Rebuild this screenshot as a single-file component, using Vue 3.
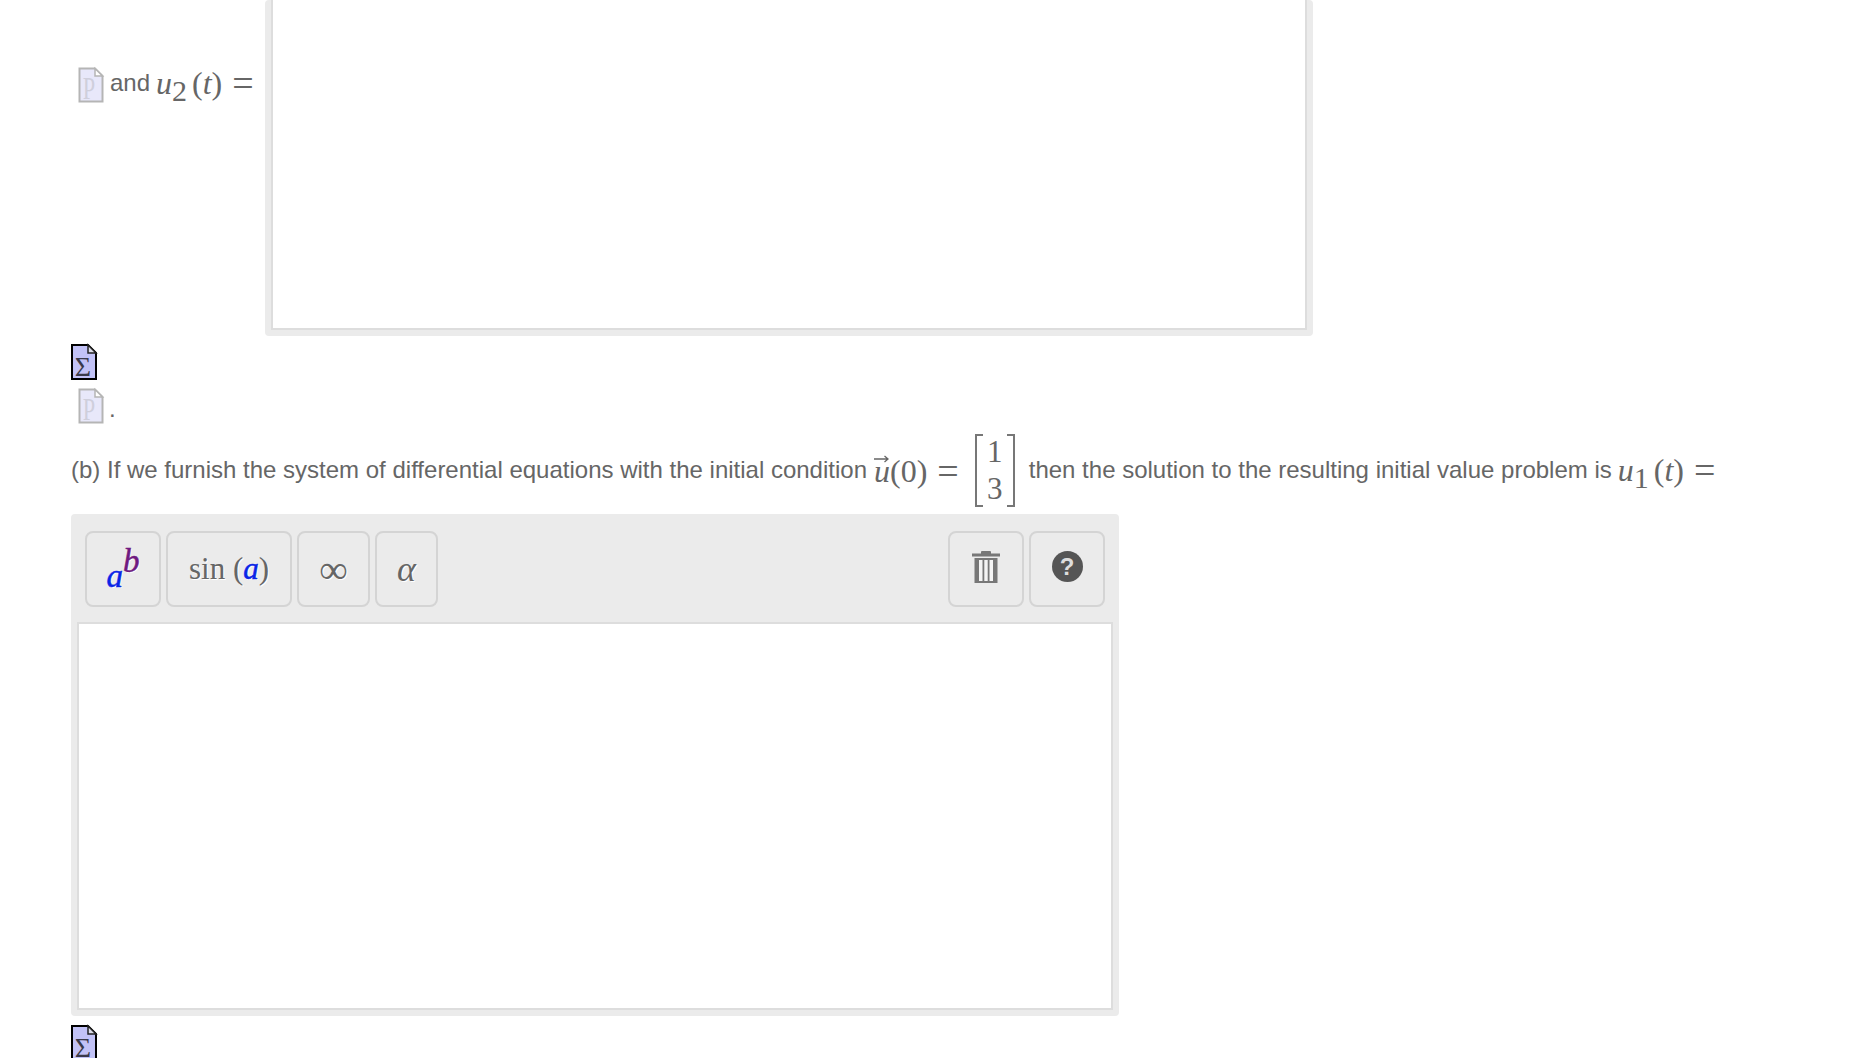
<template>
  <div class="page">
    <div class="answer-row">
      <div class="inline-text first">
        <svg class="doc-icon" viewBox="0 0 26 36" width="26" height="36">
          <path d="M1.500 1.500H17L24.500 9V34.500H1.500Z" fill="#e8e8fa" stroke="#b5b5b5" stroke-width="2" />
          <path d="M17 1.500V9H24.500Z" fill="#fff" stroke="#b5b5b5" stroke-width="1.500" />
          <text transform="translate(11 32) scale(.72 1)" class="icon-p">P</text>
        </svg>
        <span class="and">and</span>
        <span class="math"><i>u</i><span class="sub">2</span><span class="paren">(<i>t</i>)</span><span class="eq">=</span></span>
      </div>
      <div class="box-outer top-box">
        <div class="box-field"></div>
      </div>
    </div>

    <svg class="doc-icon sigma" viewBox="0 0 26 36" width="26" height="36">
      <path d="M1 1H17L25 9V35H1Z" fill="#c2c2f6" stroke="#000" stroke-width="2" />
      <path d="M17 1V9H25Z" fill="#dcdce8" stroke="#222" stroke-width="1.500" />
      <text x="12" y="32" class="icon-sigma">Σ</text>
    </svg>

    <div class="dot-row">
      <svg class="doc-icon" viewBox="0 0 26 36" width="26" height="36">
        <path d="M1.500 1.500H17L24.500 9V34.500H1.500Z" fill="#e8e8fa" stroke="#b5b5b5" stroke-width="2" />
        <path d="M17 1.500V9H24.500Z" fill="#fff" stroke="#b5b5b5" stroke-width="1.500" />
        <text transform="translate(11 32) scale(.72 1)" class="icon-p">P</text>
      </svg>
      <span class="and dot">.</span>
    </div>

    <div class="question">
      <span>(b) If we furnish the system of differential equations with the initial condition</span>
      <span class="math vec"><span class="arrow-wrap"><i>u</i><svg class="arrow" viewBox="0 0 15 8" width="15" height="8"><path d="M0 4H14M10.500 1L14 4L10.500 7" fill="none" stroke="#666" stroke-width="1.300" /></svg></span>(0)<span class="eq">=</span></span>
      <span class="matrix">
        <span class="bracket left"></span>
        <span class="cells"><span>1</span><span>3</span></span>
        <span class="bracket right"></span>
      </span>
      <span>then the solution to the resulting initial value problem is</span>
      <span class="math"><i>u</i><span class="sub">1</span><span class="paren">(<i>t</i>)</span><span class="eq">=</span></span>
    </div>

    <div class="box-outer editor">
      <div class="toolbar">
        <div class="tool-group">
          <button class="tool tool-power"><i class="blue">a</i><i class="purple">b</i></button>
          <button class="tool tool-sin">sin <span>(<i class="blue">a</i>)</span></button>
          <button class="tool tool-inf">∞</button>
          <button class="tool tool-alpha"><i>α</i></button>
        </div>
        <div class="tool-group">
          <button class="tool tool-icon">
            <svg viewBox="0 0 30 34" width="30" height="34">
              <path d="M10 3.500V2Q10 1 11 1H19Q20 1 20 2V3.500H29V6.500H1V3.500Z" fill="#777" />
              <path d="M3.500 8H26.500V33H3.500Z" fill="#777" />
              <rect x="8" y="10" width="3.500" height="21" fill="#f4f4f4" />
              <rect x="18.500" y="10" width="3.500" height="21" fill="#f4f4f4" />
              <rect x="13.300" y="10" width="3.400" height="21" fill="#f4f4f4" />
            </svg>
          </button>
          <button class="tool tool-icon">
            <span class="help">?</span>
          </button>
        </div>
      </div>
      <div class="box-field editor-field"></div>
    </div>

    <svg class="doc-icon sigma last" viewBox="0 0 26 36" width="26" height="36">
      <path d="M1 1H17L25 9V35H1Z" fill="#c2c2f6" stroke="#000" stroke-width="2" />
      <path d="M17 1V9H25Z" fill="#dcdce8" stroke="#222" stroke-width="1.500" />
      <text x="12" y="32" class="icon-sigma">Σ</text>
    </svg>
  </div>
</template>

<script setup>
</script>

<style>
html, body {
  margin: 0;
  height: 100%;
  overflow: hidden;
  background: #fff;
}
</style>

<style scoped>
.page {
  height: 1058px;
  overflow: hidden;
  padding-left: 71px;
  font-family: "Liberation Sans", Arial, sans-serif;
  font-size: 24px;
  color: #666;
  box-sizing: border-box;
}
.answer-row {
  display: flex;
  align-items: flex-start;
  height: 336px;
}
.inline-text {
  display: flex;
  align-items: center;
}
.first {
  padding: 64px 0 0 7px;
  width: 187px;
  box-sizing: border-box;
  white-space: nowrap;
}
.doc-icon {
  display: block;
  flex: none;
  overflow: visible;
}
.icon-p {
  font-family: "Liberation Serif", serif;
  font-size: 31px;
  fill: #cfcfdc;
  text-anchor: middle;
}
.icon-sigma {
  font-family: "Liberation Serif", serif;
  font-size: 28px;
  fill: #3a3a4a;
  text-anchor: middle;
}
.and {
  margin-left: 6px;
  position: relative;
  top: -2px;
}
.math {
  font-family: "Liberation Serif", serif;
  font-size: 32px;
  line-height: 40px;
  white-space: nowrap;
}
.first .math {
  margin-left: 6px;
  position: relative;
  top: -2px;
}
.sub {
  font-size: 30px;
  position: relative;
  top: 7px;
}
.paren {
  margin-left: 5px;
}
.eq {
  margin-left: 10px;
  font-size: 38px;
  line-height: 1;
  position: relative;
  top: 2px;
}
.box-outer {
  background: #ebebeb;
  border-radius: 4px;
  box-sizing: border-box;
  padding: 0 6px 6px;
}
.top-box {
  width: 1048px;
  height: 336px;
  margin-left: 7px;
}
.box-field {
  background: #fff;
  border: 2px solid #ddd;
  box-sizing: border-box;
}
.top-box .box-field {
  height: 100%;
  border-top: none;
}
.sigma {
  margin-top: 8px;
}
.dot-row {
  display: flex;
  align-items: center;
  margin: 8px 0 0 7px;
}
.dot {
  margin-left: 5px;
  position: relative;
  top: 3px;
}
.question {
  display: flex;
  align-items: center;
  height: 74px;
  margin-top: 9px;
  white-space: nowrap;
}
.vec {
  margin-left: 7px;
}
.arrow-wrap {
  position: relative;
}
.arrow {
  position: absolute;
  left: 0;
  top: 2px;
}
.matrix {
  display: flex;
  align-items: stretch;
  height: 73px;
  margin: 0 14px 0 16px;
}
.bracket {
  width: 6px;
  border: 2px solid #777;
}
.bracket.left {
  border-right: none;
}
.bracket.right {
  border-left: none;
}
.cells {
  width: 24px;
  display: flex;
  flex-direction: column;
  justify-content: space-between;
  align-items: center;
  font-family: "Liberation Serif", serif;
  font-size: 31px;
  line-height: 36px;
}
.question .math:last-child {
  margin-left: 6px;
}
.editor {
  width: 1048px;
  height: 502px;
  margin-top: 7px;
  padding-top: 17px;
  display: flex;
  flex-direction: column;
}
.toolbar {
  display: flex;
  justify-content: space-between;
  padding: 0 8px;
  margin-bottom: 15px;
}
.tool-group {
  display: flex;
  gap: 5px;
}
.tool {
  height: 76px;
  padding: 0;
  background: #ebebeb;
  border: 2px solid #d4d4d4;
  border-radius: 8px;
  box-sizing: border-box;
  color: #666;
  font-family: "Liberation Serif", serif;
  font-size: 31px;
  text-shadow: 1px 1px 0 #fff;
  display: flex;
  align-items: center;
  justify-content: center;
}
.tool-power {
  width: 76px;
  font-size: 33px;
}
.tool-power .blue {
  position: relative;
  top: 7px;
}
.tool-power .purple {
  position: relative;
  top: -8px;
}
.blue {
  color: #0a24e6;
  -webkit-text-stroke: 0.5px #0a24e6;
}
.purple {
  color: #6f1a80;
  -webkit-text-stroke: 0.5px #6f1a80;
}
.tool-sin {
  width: 126px;
  white-space: pre;
}
.tool-inf {
  width: 73px;
  font-size: 40px;
}
.tool-alpha {
  width: 63px;
  font-size: 36px;
}
.tool-icon {
  width: 76px;
}
.help {
  width: 31px;
  height: 31px;
  margin-top: -6px;
  border-radius: 50%;
  background: #555;
  color: #ddd;
  font-family: "Liberation Sans", sans-serif;
  font-weight: 700;
  font-size: 24px;
  line-height: 31px;
  text-align: center;
  text-shadow: none;
}
.tool-icon svg {
  margin-top: -5px;
}
.editor-field {
  flex: 1;
}
.last {
  margin-top: 9px;
}
</style>
